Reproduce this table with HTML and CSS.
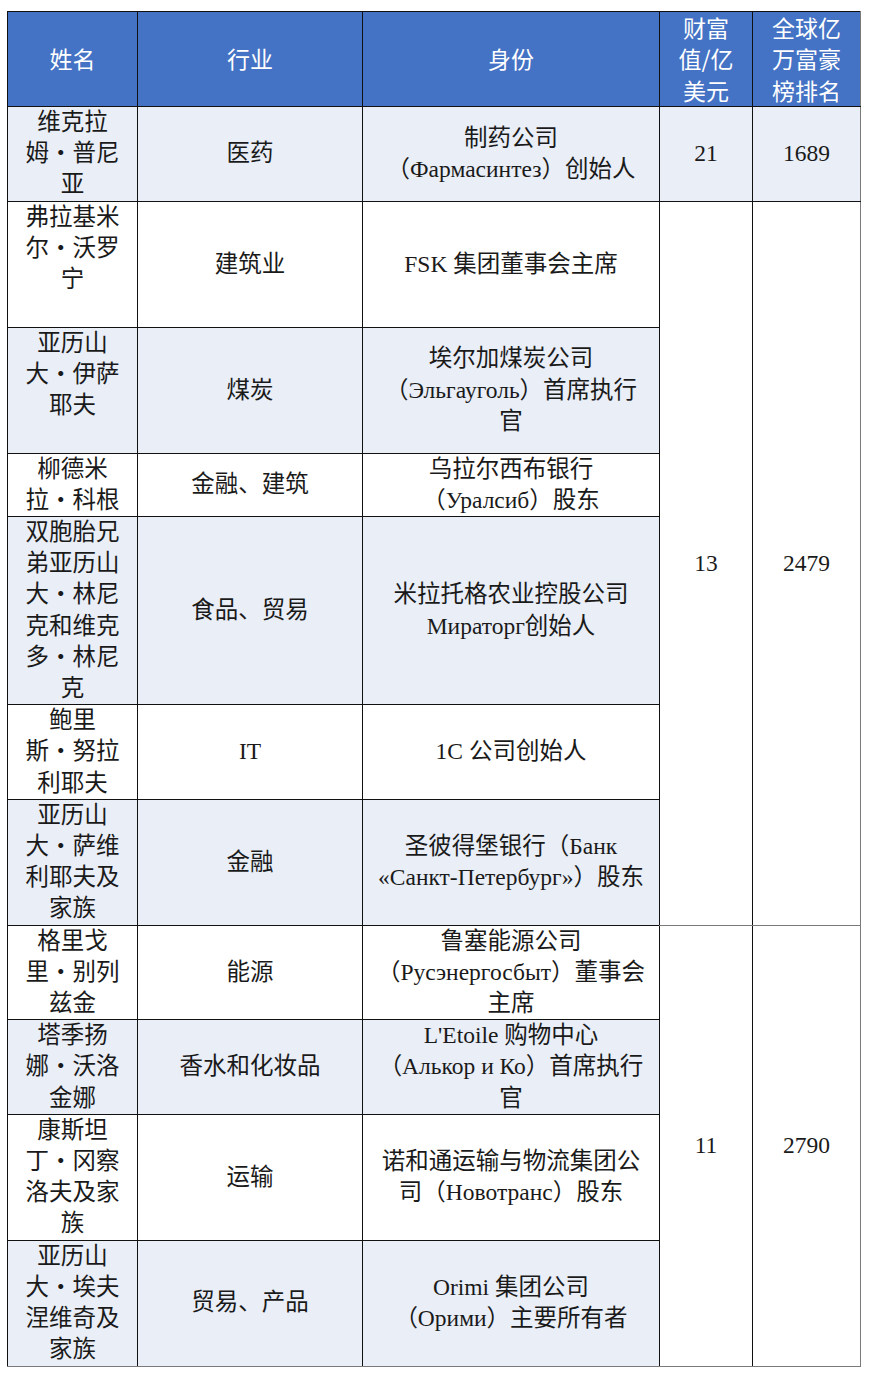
FILE: index.html
```html
<!DOCTYPE html>
<html lang="zh-CN">
<head>
<meta charset="utf-8">
<title>俄罗斯富豪</title>
<link rel="stylesheet" href="styles.css">
</head>
<body>
<table class="rich">
  <colgroup>
    <col class="c-name"><col class="c-ind"><col class="c-id"><col class="c-val"><col class="c-rank">
  </colgroup>
  <thead>
    <tr class="head">
      <th>姓名</th>
      <th>行业</th>
      <th>身份</th>
      <th>财富<br>值/亿<br>美元</th>
      <th class="g">全球亿<br>万富豪<br>榜排名</th>
    </tr>
  </thead>
  <tbody>
    <tr class="alt">
      <td>维克拉<br>姆・普尼<br>亚</td>
      <td>医药</td>
      <td>制药公司<br>（Фармасинтез）创始人</td>
      <td>21</td>
      <td class="g">1689</td>
    </tr>
    <tr class="l4">
      <td class="top">弗拉基米<br>尔・沃罗<br>宁</td>
      <td>建筑业</td>
      <td>FSK 集团董事会主席</td>
      <td class="span" rowspan="6">13</td>
      <td class="span g" rowspan="6">2479</td>
    </tr>
    <tr class="alt l4">
      <td class="top">亚历山<br>大・伊萨<br>耶夫</td>
      <td>煤炭</td>
      <td>埃尔加煤炭公司<br>（Эльгауголь）首席执行<br>官</td>
    </tr>
    <tr>
      <td>柳德米<br>拉・科根</td>
      <td>金融、建筑</td>
      <td>乌拉尔西布银行<br>（Уралсиб）股东</td>
    </tr>
    <tr class="alt">
      <td>双胞胎兄<br>弟亚历山<br>大・林尼<br>克和维克<br>多・林尼<br>克</td>
      <td>食品、贸易</td>
      <td>米拉托格农业控股公司<br>Мираторг创始人</td>
    </tr>
    <tr>
      <td>鲍里<br>斯・努拉<br>利耶夫</td>
      <td>IT</td>
      <td>1С 公司创始人</td>
    </tr>
    <tr class="alt">
      <td>亚历山<br>大・萨维<br>利耶夫及<br>家族</td>
      <td>金融</td>
      <td>圣彼得堡银行（Банк<br>«Санкт-Петербург»）股东</td>
    </tr>
    <tr>
      <td>格里戈<br>里・别列<br>兹金</td>
      <td>能源</td>
      <td>鲁塞能源公司<br>（Русэнергосбыт）董事会<br>主席</td>
      <td class="span" rowspan="4">11</td>
      <td class="span g" rowspan="4">2790</td>
    </tr>
    <tr class="alt gtop">
      <td>塔季扬<br>娜・沃洛<br>金娜</td>
      <td>香水和化妆品</td>
      <td>L'Etoile 购物中心<br>（Алькор и Ко）首席执行<br>官</td>
    </tr>
    <tr>
      <td>康斯坦<br>丁・冈察<br>洛夫及家<br>族</td>
      <td>运输</td>
      <td>诺和通运输与物流集团公<br>司（Новотранс）股东</td>
    </tr>
    <tr class="alt last">
      <td>亚历山<br>大・埃夫<br>涅维奇及<br>家族</td>
      <td>贸易、产品</td>
      <td>Orimi 集团公司<br>（Орими）主要所有者</td>
    </tr>
  </tbody>
</table>
</body>
</html>
```
FILE: styles.css
```css
html, body {
  margin: 0;
  padding: 0;
  background: #ffffff;
}

.rich {
  margin: 11px 0 0 7px;
  width: 853px;
  table-layout: fixed;
  border-collapse: collapse;
  font-family: "Liberation Serif", "Noto Sans CJK SC", serif;
  font-size: 23.5px;
  line-height: 31.2px;
  color: #1a1a1a;
}

.c-name { width: 130px; }
.c-ind { width: 225px; }
.c-id { width: 297px; }
.c-val { width: 93px; }
.c-rank { width: 108px; }

.rich th,
.rich td {
  padding: 0;
  border: 1px solid #111111;
  text-align: center;
  vertical-align: middle;
  white-space: nowrap;
  overflow: hidden;
}

.rich th {
  background: #4472c4;
  color: #ffffff;
  font-family: "Noto Sans CJK SC", "Liberation Sans", sans-serif;
  font-weight: normal;
  font-size: 23px;
  line-height: 31.2px;
  height: 94px;
}

.rich tr.alt td {
  background: #e9eef7;
}

.rich tr.alt td.span,
.rich td.span {
  background: #ffffff;
}

.rich tr.l4 td {
  height: 125px;
}

.rich td.top {
  vertical-align: top;
}

.rich .g {
  border-left-color: #7a7a7a;
  border-right-color: #7a7a7a;
}

.rich td.span {
  border-bottom-color: #7a7a7a;
}

.rich tr.gtop td {
  border-top-color: #7a7a7a;
}

.rich tr.last td {
  border-bottom-color: #7a7a7a;
}
```
